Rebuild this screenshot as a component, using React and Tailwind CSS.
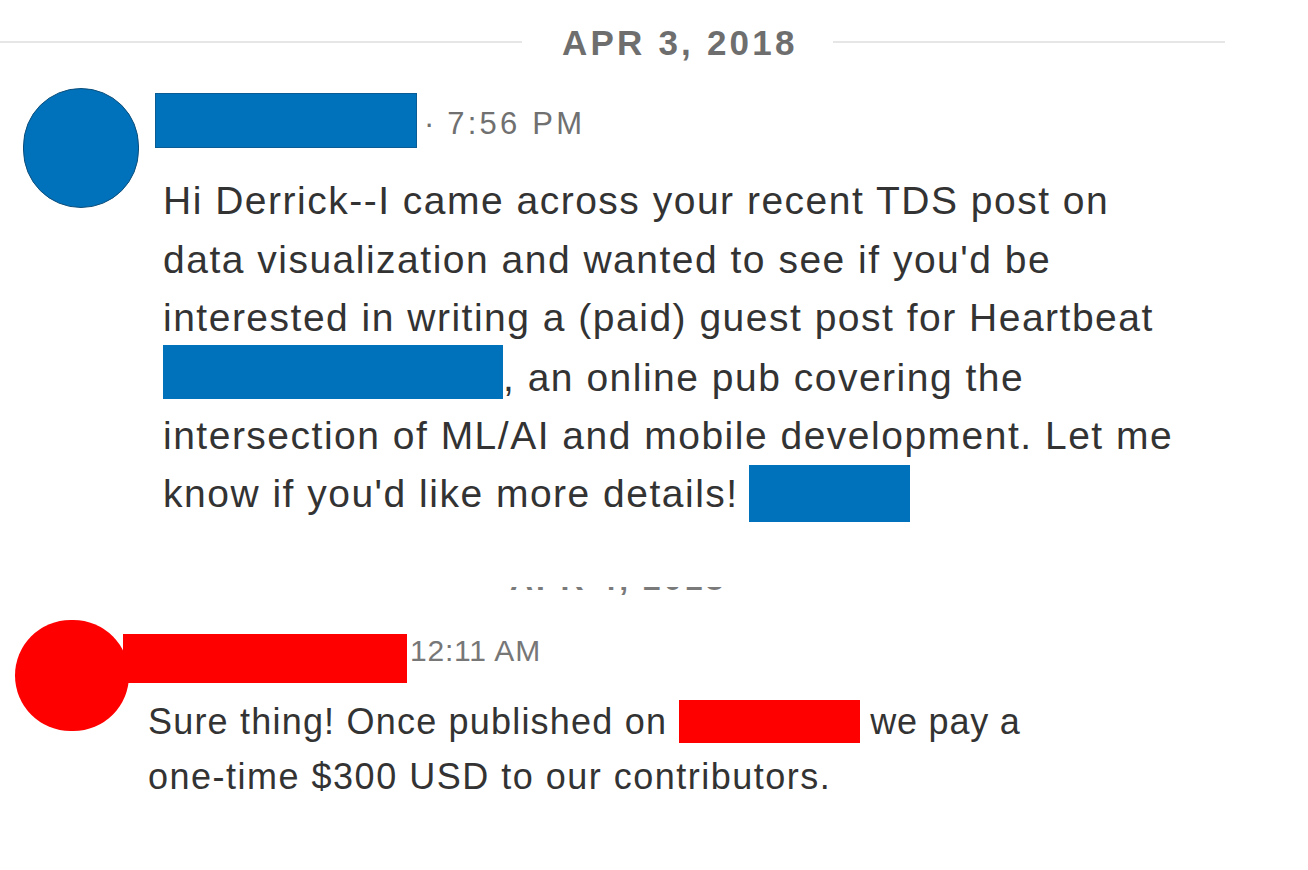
export default function App() {
  return (
    <div className="w-[1308px] h-[870px] bg-white overflow-hidden font-['Liberation_Sans',Arial,sans-serif]">
      {/* Date divider */}
      <div className="pt-[20px] pr-[83px]">
        <div className="flex items-center h-[44px]">
          <div className="w-[522px] h-[2px] bg-[#e6e6e6]" />
          <div className="ml-[40px] mr-[35px] text-[35px] leading-none font-bold tracking-[3.2px] text-[#6e6e6e] whitespace-nowrap">
            APR 3, 2018
          </div>
          <div className="flex-1 h-[2px] bg-[#e6e6e6]" />
        </div>
      </div>

      {/* Message 1 */}
      <div className="mt-[24px] flex pl-[23px]">
        <div className="w-[116px] h-[120px] rounded-full bg-[#0072bb] border border-[#0d4f7c] shrink-0" />
        <div className="ml-[16px]">
          <div className="flex items-start mt-[5px]">
            <div className="w-[262px] h-[55px] bg-[#0072bb] border border-[#0a5c94]" />
            <div className="ml-[7px] mt-[15px] text-[31px] leading-none text-[#707070] whitespace-nowrap">
              <span className="tracking-[4px]">·</span>
              <span className="ml-[9px] tracking-[3.2px]">7:56 PM</span>
            </div>
          </div>
          <div className="mt-[24px] pl-[8px] text-[39px] leading-[58.5px] tracking-[1.5px] text-[#333333] whitespace-nowrap">
            <div>Hi Derrick--I came across your recent TDS post on</div>
            <div>data visualization and wanted to see if you'd be</div>
            <div>interested in writing a (paid) guest post for Heartbeat</div>
            <div>
              <span className="inline-block align-baseline w-[340px] h-[54px] mb-[-8.5px] mt-[-3px] bg-[#0072bb]" />
              , an online pub covering the
            </div>
            <div>intersection of ML/AI and mobile development. Let me</div>
            <div>
              know if you'd like more details!
              <span className="inline-block align-baseline ml-[10px] w-[161px] h-[57px] mb-[-15px] bg-[#0072bb]" />
            </div>
          </div>
        </div>
      </div>

      {/* Partially hidden date */}
      <div className="mt-[63px] h-[9px] overflow-hidden pl-[510px]">
        <div className="mt-[-24px] text-[32px] leading-none font-bold tracking-[3px] text-[#7a7a7a] whitespace-nowrap">
          APR 4, 2018
        </div>
      </div>

      {/* Message 2 */}
      <div className="mt-[24px] flex pl-[15px]">
        <div className="w-[114px] h-[111px] rounded-full bg-[#ff0000] shrink-0" />
        <div className="ml-[-6px]">
          <div className="flex items-start mt-[14px]">
            <div className="w-[284px] h-[49px] bg-[#ff0000]" />
            <div className="ml-[3px] mt-[2px] text-[30px] leading-none tracking-[0.8px] text-[#777777] whitespace-nowrap">
              12:11 AM
            </div>
          </div>
          <div className="mt-[11px] pl-[25px] text-[36px] leading-[55px] tracking-[1.5px] text-[#333333] whitespace-nowrap">
            <div>
              <span className="tracking-[1.2px]">Sure thing! Once published on</span>
              <span className="inline-block align-baseline ml-[12px] w-[181px] h-[43px] mb-[-9px] bg-[#ff0000]" />
              <span className="ml-[10px] tracking-[0.8px]">we pay a</span>
            </div>
            <div>one-time $300 USD to our contributors.</div>
          </div>
        </div>
      </div>
    </div>
  );
}
